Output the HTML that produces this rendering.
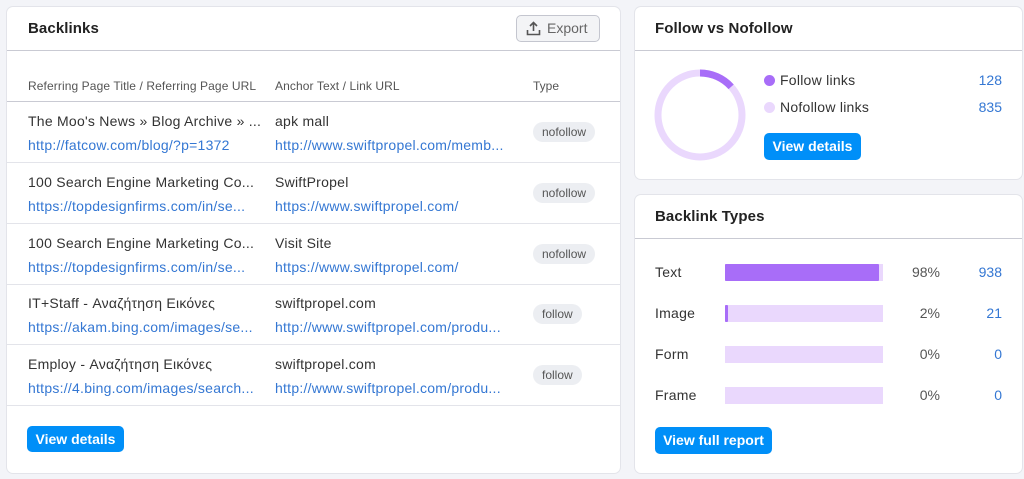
<!DOCTYPE html>
<html><head><meta charset="utf-8"><style>
*{margin:0;padding:0;box-sizing:border-box}
body{width:1024px;height:479px;background:#f3f4f8;font-family:"Liberation Sans",sans-serif;position:relative;overflow:hidden;color:#333}
.card{position:absolute;background:#fff;border-radius:6px;box-shadow:0 0 0 1px #e3e4ea}
.abs{position:absolute;white-space:nowrap}
.h{font-weight:bold;font-size:15px;color:#222;letter-spacing:.1px}
.hl{position:absolute;left:0;right:0;height:1px;background:#c9cad3}
.rl{position:absolute;left:0;right:0;height:1px;background:#e3e4ea}
.t{font-size:14px;color:#333;letter-spacing:.25px}
.u{font-size:14px;color:#3477d3;letter-spacing:.25px}
.tag{position:absolute;background:#eceef2;border-radius:10px;font-size:12px;color:#555;height:20px;line-height:20px;padding:0 9px}
.btn{position:absolute;background:#008ff8;color:#fff;font-weight:bold;font-size:14px;border-radius:5px;height:26px;line-height:26px;text-align:center}
.bar{position:absolute;left:725px;width:158px;height:17px;background:#ead8fd}
.bar i{position:absolute;left:0;top:0;bottom:0;background:#a86df8;border-radius:1px}
.n{font-size:14px;color:#3477d3;text-align:right}
.p{font-size:14px;color:#555;text-align:right}
</style></head><body>
<div class="card" style="left:7px;top:7px;width:613px;height:466px"></div>
<div class="abs h" style="left:28px;top:20px">Backlinks</div>
<div class="abs" style="left:516px;top:15px;width:84px;height:27px;border:1px solid #c4c6cf;border-radius:5px;background:#f3f4f6;font-size:14px;color:#666;line-height:25px;padding-left:30px">Export
<svg style="position:absolute;left:9px;top:5px" width="15" height="15" viewBox="0 0 15 15" fill="none" stroke="#555" stroke-width="1.6"><path d="M7.5 10V1.5M4 5l3.5-3.5L11 5M1.5 9v4.5h12V9"/></svg></div>
<div class="hl" style="left:7px;width:613px;top:50px"></div>
<div class="abs" style="left:28px;top:79px;font-size:12px;color:#555;letter-spacing:.1px">Referring Page Title / Referring Page URL</div>
<div class="abs" style="left:275px;top:79px;font-size:12px;color:#555;letter-spacing:.1px">Anchor Text / Link URL</div>
<div class="abs" style="left:533px;top:79px;font-size:12px;color:#555">Type</div>
<div class="hl" style="left:7px;width:613px;top:101px"></div>

<div class="abs t" style="left:28px;top:113px">The Moo's News » Blog Archive » ...</div>
<div class="abs u" style="left:28px;top:137px">http://fatcow.com/blog/?p=1372</div>
<div class="abs t" style="left:275px;top:113px">apk mall</div>
<div class="abs u" style="left:275px;top:137px">http://www.swiftpropel.com/memb...</div>
<div class="tag" style="left:533px;top:122px">nofollow</div>
<div class="rl" style="left:7px;width:613px;top:162px"></div>

<div class="abs t" style="left:28px;top:174px">100 Search Engine Marketing Co...</div>
<div class="abs u" style="left:28px;top:198px">https://topdesignfirms.com/in/se...</div>
<div class="abs t" style="left:275px;top:174px">SwiftPropel</div>
<div class="abs u" style="left:275px;top:198px">https://www.swiftpropel.com/</div>
<div class="tag" style="left:533px;top:183px">nofollow</div>
<div class="rl" style="left:7px;width:613px;top:223px"></div>

<div class="abs t" style="left:28px;top:235px">100 Search Engine Marketing Co...</div>
<div class="abs u" style="left:28px;top:259px">https://topdesignfirms.com/in/se...</div>
<div class="abs t" style="left:275px;top:235px">Visit Site</div>
<div class="abs u" style="left:275px;top:259px">https://www.swiftpropel.com/</div>
<div class="tag" style="left:533px;top:244px">nofollow</div>
<div class="rl" style="left:7px;width:613px;top:284px"></div>

<div class="abs t" style="left:28px;top:295px">IT+Staff - Αναζήτηση Εικόνες</div>
<div class="abs u" style="left:28px;top:319px">https://akam.bing.com/images/se...</div>
<div class="abs t" style="left:275px;top:295px">swiftpropel.com</div>
<div class="abs u" style="left:275px;top:319px">http://www.swiftpropel.com/produ...</div>
<div class="tag" style="left:533px;top:304px">follow</div>
<div class="rl" style="left:7px;width:613px;top:344px"></div>

<div class="abs t" style="left:28px;top:356px">Employ - Αναζήτηση Εικόνες</div>
<div class="abs u" style="left:28px;top:380px">https://4.bing.com/images/search...</div>
<div class="abs t" style="left:275px;top:356px">swiftpropel.com</div>
<div class="abs u" style="left:275px;top:380px">http://www.swiftpropel.com/produ...</div>
<div class="tag" style="left:533px;top:365px">follow</div>
<div class="rl" style="left:7px;width:613px;top:405px"></div>
<div class="btn" style="left:27px;top:426px;width:97px">View details</div>

<div class="card" style="left:635px;top:7px;width:387px;height:172px"></div>
<div class="abs h" style="left:655px;top:20px">Follow vs Nofollow</div>
<div class="hl" style="left:635px;width:387px;top:50px"></div>
<svg class="abs" style="left:654px;top:69px" width="92" height="92" viewBox="0 0 92 92">
<circle cx="46" cy="46" r="42" fill="none" stroke="#ead8fd" stroke-width="7"/>
<circle cx="46" cy="46" r="42" fill="none" stroke="#a86df8" stroke-width="7" stroke-dasharray="35 300" transform="rotate(-90 46 46)"/>
</svg>
<div class="abs" style="left:764px;top:75px;width:11px;height:11px;border-radius:50%;background:#a86df8"></div>
<div class="abs t" style="left:780px;top:72px">Follow links</div>
<div class="abs n" style="left:950px;width:52px;top:72px">128</div>
<div class="abs" style="left:764px;top:102px;width:11px;height:11px;border-radius:50%;background:#ead8fd"></div>
<div class="abs t" style="left:780px;top:99px">Nofollow links</div>
<div class="abs n" style="left:950px;width:52px;top:99px">835</div>
<div class="btn" style="left:764px;top:133px;width:97px;height:27px;line-height:27px">View details</div>

<div class="card" style="left:635px;top:195px;width:387px;height:278px"></div>
<div class="abs h" style="left:655px;top:208px">Backlink Types</div>
<div class="hl" style="left:635px;width:387px;top:238px"></div>
<div class="abs t" style="left:655px;top:264px">Text</div>
<div class="bar" style="top:264px"><i style="width:154px"></i></div>
<div class="abs p" style="left:880px;width:60px;top:264px">98%</div>
<div class="abs n" style="left:950px;width:52px;top:264px">938</div>
<div class="abs t" style="left:655px;top:305px">Image</div>
<div class="bar" style="top:305px"><i style="width:3px"></i></div>
<div class="abs p" style="left:880px;width:60px;top:305px">2%</div>
<div class="abs n" style="left:950px;width:52px;top:305px">21</div>
<div class="abs t" style="left:655px;top:346px">Form</div>
<div class="bar" style="top:346px"></div>
<div class="abs p" style="left:880px;width:60px;top:346px">0%</div>
<div class="abs n" style="left:950px;width:52px;top:346px">0</div>
<div class="abs t" style="left:655px;top:387px">Frame</div>
<div class="bar" style="top:387px"></div>
<div class="abs p" style="left:880px;width:60px;top:387px">0%</div>
<div class="abs n" style="left:950px;width:52px;top:387px">0</div>
<div class="btn" style="left:655px;top:427px;width:117px;height:27px;line-height:27px">View full report</div>
</body></html>
